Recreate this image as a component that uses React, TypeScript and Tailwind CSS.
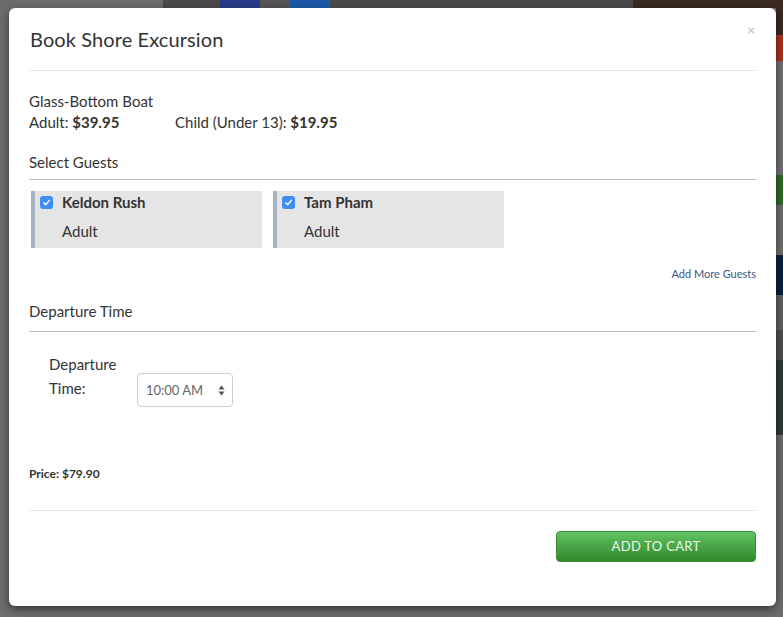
import React from 'react';

const guests = [
  { name: 'Keldon Rush', type: 'Adult' },
  { name: 'Tam Pham', type: 'Adult' },
];

// strips of the dimmed page showing behind the modal
const topStrip = [
  { w: 'w-[163px]', c: 'bg-[#6c6c6c]' },
  { w: 'w-[57px]', c: 'bg-[#4a4a4a]' },
  { w: 'w-[40px]', c: 'bg-[#2a3a8a]' },
  { w: 'w-[30px]', c: 'bg-[#555]' },
  { w: 'w-[40px]', c: 'bg-[#1c5aa8]' },
  { w: 'w-[303px]', c: 'bg-[#4a4a4a]' },
  { w: 'flex-1', c: 'bg-[#3a2a22]' },
];

const rightStrip = [
  { h: 'h-[27px]', c: 'bg-[#3a2a22]' },
  { h: 'h-[26px]', c: 'bg-[#a8321c]' },
  { h: 'h-[114px]', c: 'bg-[#707070]' },
  { h: 'h-[30px]', c: 'bg-[#2e6a2a]' },
  { h: 'h-[50px]', c: 'bg-[#6e6e6e]' },
  { h: 'h-[40px]', c: 'bg-[#0d2040]' },
  { h: 'h-[35px]', c: 'bg-[#5f6162]' },
  { h: 'h-[30px]', c: 'bg-[#4c4f50]' },
  { h: 'h-[75px]', c: 'bg-[#2f3a38]' },
  { h: 'flex-1', c: 'bg-[#6c6c6c]' },
];

function Check() {
  return (
    <span className="flex h-[13px] w-[13px] items-center justify-center rounded-[3px] bg-[#3d8ef0]">
      <svg width="9" height="9" viewBox="0 0 10 10" fill="none">
        <path d="M2 5.2 L4.2 7.4 L8.2 2.6" stroke="white" strokeWidth="1.6" strokeLinecap="round" strokeLinejoin="round" />
      </svg>
    </span>
  );
}

export default function App() {
  return (
    <div className="relative h-[617px] w-[783px] overflow-hidden bg-[#6c6c6c] font-['Lato',sans-serif] text-[#333]">
      {/* dimmed page */}
      <div className="absolute inset-0 flex flex-col">
        <div className="flex h-[8px]">
          {topStrip.map((s, i) => (
            <div key={i} className={`${s.w} ${s.c}`} />
          ))}
        </div>
        <div className="flex flex-1 justify-end">
          <div className="flex w-[7px] flex-col">
            {rightStrip.map((s, i) => (
              <div key={i} className={`${s.h} ${s.c}`} />
            ))}
          </div>
        </div>
      </div>

      {/* modal */}
      <div className="absolute left-[9px] top-[8px] flex h-[598px] w-[767px] flex-col rounded-[6px] bg-white px-[20px] shadow-[0_3px_9px_rgba(0,0,0,0.5)]">
        <div className="flex h-[63px] items-center justify-between border-b border-[#e5e5e5] pl-[1px]">
          <h1 className="text-[20px] tracking-[0.1px] text-[#333]">Book Shore Excursion</h1>
          <span className="-mt-[18px] mr-[1px] text-[14px] font-bold leading-none text-[#c9c9c9]">×</span>
        </div>

        <div className="mt-[20px] text-[15px] leading-[21px]">
          <div>Glass-Bottom Boat</div>
          <div className="flex">
            <span className="w-[146px]">
              Adult: <b>$39.95</b>
            </span>
            <span>
              Child (Under 13): <b>$19.95</b>
            </span>
          </div>
        </div>

        <div className="mt-[18px] border-b border-[#bdbdbd] pb-[6px] text-[15px] leading-[22px]">Select Guests</div>

        <div className="mt-[11px] flex gap-[11px] pl-[2px]">
          {guests.map((g) => (
            <div key={g.name} className="h-[57px] w-[231px] border-l-[4px] border-[#a9b1c5] bg-[#e5e5e5] pl-[5px] text-[15px] leading-[20px]">
              <div className="flex items-center gap-[9px] pt-[1px]">
                <Check />
                <span className="font-bold">{g.name}</span>
              </div>
              <div className="mt-[9px] pl-[22px]">{g.type}</div>
            </div>
          ))}
        </div>

        <div className="mt-[19px] text-right text-[11px] leading-[14px] text-[#3b5683]">Add More Guests</div>

        <div className="mt-[19px] border-b border-[#bdbdbd] pb-[9px] text-[15px] leading-[22px]">Departure Time</div>

        <div className="mt-[20px] flex items-start pl-[20px] text-[15px] leading-[24px]">
          <div className="w-[88px]">
            Departure
            <br />
            Time:
          </div>
          <div className="mt-[21px] flex h-[34px] w-[96px] items-center rounded-[4px] border border-[#ccc] pl-[8px] pr-[7px] text-[13px] text-[#666]">
            <span className="flex-1">10:00 AM</span>
            <svg width="7" height="11" viewBox="0 0 7 11">
              <path d="M3.5 0.5 L6.5 4.5 H0.5 Z" fill="#555" />
              <path d="M3.5 10.5 L6.5 6.5 H0.5 Z" fill="#555" />
            </svg>
          </div>
        </div>

        <div className="mt-[59px] text-[12px] font-bold leading-[16px]">Price: $79.90</div>

        <div className="mt-[28px] border-t border-[#e5e5e5]" />

        <div className="mt-[20px] flex justify-end">
          <button className="h-[31px] w-[200px] rounded-[4px] border border-[#3a8c35] bg-gradient-to-b from-[#62c262] to-[#2f8a2c] text-[13px] tracking-[0.3px] text-[#eaf5e8]">
            ADD TO CART
          </button>
        </div>
      </div>
    </div>
  );
}
